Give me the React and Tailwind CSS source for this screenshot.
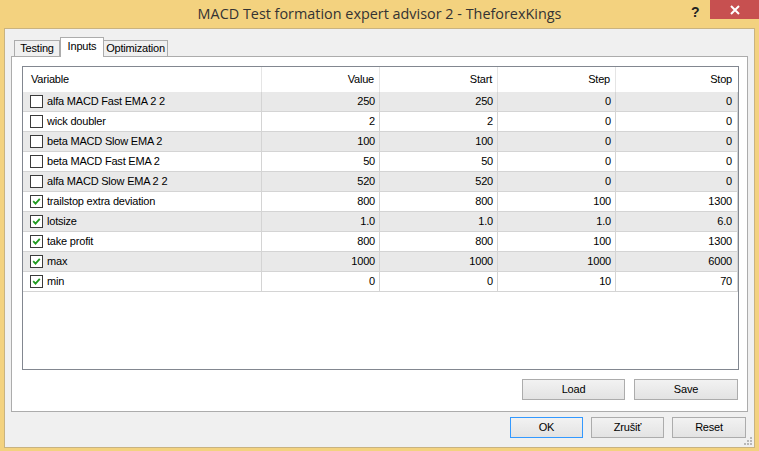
import React from "react";

const ROWS = [
  { name: "alfa MACD Fast EMA 2 2", on: false, value: "250", start: "250", step: "0", stop: "0" },
  { name: "wick doubler", on: false, value: "2", start: "2", step: "0", stop: "0" },
  { name: "beta MACD Slow EMA 2", on: false, value: "100", start: "100", step: "0", stop: "0" },
  { name: "beta MACD Fast EMA 2", on: false, value: "50", start: "50", step: "0", stop: "0" },
  { name: "alfa MACD Slow EMA 2 2", on: false, value: "520", start: "520", step: "0", stop: "0" },
  { name: "trailstop extra deviation", on: true, value: "800", start: "800", step: "100", stop: "1300" },
  { name: "lotsize", on: true, value: "1.0", start: "1.0", step: "1.0", stop: "6.0" },
  { name: "take profit", on: true, value: "800", start: "800", step: "100", stop: "1300" },
  { name: "max", on: true, value: "1000", start: "1000", step: "1000", stop: "6000" },
  { name: "min", on: true, value: "0", start: "0", step: "10", stop: "70" },
];

function CheckBox({ checked }) {
  return (
    <div className="w-[13px] h-[13px] border border-[#3a3a3a] bg-white flex items-center justify-center shrink-0">
      {checked && (
        <svg width="11" height="11" viewBox="0 0 11 11">
          <path d="M2.2 5.2 L4.5 7.6 L8.8 2.8" fill="none" stroke="#1f9a1f" strokeWidth="1.8" />
        </svg>
      )}
    </div>
  );
}

function Button({ children, primary, className }) {
  return (
    <button
      className={
        "h-[21px] border text-[11px] text-black bg-gradient-to-b from-[#f2f2f2] to-[#e3e3e3] " +
        (primary ? "border-[#3399ff] " : "border-[#acacac] ") +
        className
      }
    >
      {children}
    </button>
  );
}

export default function App() {
  return (
    <div className="w-[759px] h-[451px] bg-[#f3d27f] flex flex-col font-['Liberation_Sans',sans-serif] tracking-[-0.2px] overflow-hidden">
      {/* title bar */}
      <div className="h-[28px] relative flex items-center justify-center">
        <span className="text-[14.4px] text-[#333] font-['Open_Sans',sans-serif] tracking-normal -mt-[1px]">
          MACD Test formation expert advisor 2 - TheforexKings
        </span>
        <span className="absolute left-[691px] top-[2px] text-[14px] font-bold text-[#222] tracking-normal">?</span>
        <div className="absolute left-[710px] top-0 w-[49px] h-[19px] bg-[#c75050] flex items-center justify-center">
          <svg width="10" height="10" viewBox="0 0 10 10">
            <path d="M1 1 L9 9 M9 1 L1 9" stroke="white" strokeWidth="2" />
          </svg>
        </div>
      </div>

      {/* client */}
      <div className="ml-[4px] mr-[4px] mb-[3px] flex-1 border border-[#c9b380] bg-[#f0f0f0] flex flex-col relative">
        {/* tabs */}
        <div className="h-[27px] pl-[9px] flex items-end text-[11px] text-black">
          <div className="h-[16px] w-[46px] border border-b-0 border-[#acacac] bg-[#f0f0f0] flex items-center justify-center">Testing</div>
          <div className="h-[20px] w-[44px] -mb-px border border-b-0 border-[#acacac] bg-white flex items-center justify-center pb-[2px] relative z-10">Inputs</div>
          <div className="h-[16px] w-[64px] border border-b-0 border-l-0 border-[#acacac] bg-[#f0f0f0] flex items-center justify-center">Optimization</div>
        </div>

        {/* panel */}
        <div className="ml-[6px] mr-[6px] h-[356px] border border-[#acacac] bg-white flex flex-col">
          <div className="ml-[10px] mr-[8px] mt-[9px] h-[304px] border border-[#828790] bg-white text-[11px] text-black">
            <div className="grid grid-cols-[239px_118px_118px_118px_1fr] h-[25px]">
              <div className="flex items-center pl-[8px] border-r border-[#e5e5e5]">Variable</div>
              <div className="flex items-center justify-end pr-[5px] border-r border-[#e5e5e5]">Value</div>
              <div className="flex items-center justify-end pr-[5px] border-r border-[#e5e5e5]">Start</div>
              <div className="flex items-center justify-end pr-[5px] border-r border-[#e5e5e5]">Step</div>
              <div className="flex items-center justify-end pr-[6px]">Stop</div>
            </div>
            {ROWS.map((r, i) => (
              <div
                key={i}
                className={
                  "grid grid-cols-[239px_118px_118px_118px_1fr] h-[20px] border-b border-[#d4d4d4] " +
                  (i % 2 === 0 ? "bg-[#e9e9e9]" : "bg-white")
                }
              >
                <div className="flex items-center pl-[7px] gap-[4px] border-r border-[#d4d4d4]">
                  <CheckBox checked={r.on} />
                  <span>{r.name}</span>
                </div>
                <div className="flex items-center justify-end pr-[4px] border-r border-[#d4d4d4]">{r.value}</div>
                <div className="flex items-center justify-end pr-[4px] border-r border-[#d4d4d4]">{r.start}</div>
                <div className="flex items-center justify-end pr-[4px] border-r border-[#d4d4d4]">{r.step}</div>
                <div className="flex items-center justify-end pr-[5px] border-r border-[#d4d4d4]">{r.stop}</div>
              </div>
            ))}
          </div>
          <div className="flex justify-end gap-[9px] mt-[9px] mr-[9px]">
            <Button className="w-[103px]">Load</Button>
            <Button className="w-[104px]">Save</Button>
          </div>
        </div>

        {/* bottom buttons */}
        <div className="flex justify-end gap-[8px] mt-[5px] mr-[8px]">
          <Button primary className="w-[73px]">OK</Button>
          <Button className="w-[73px]">Zrušiť</Button>
          <Button className="w-[74px]">Reset</Button>
        </div>

        {/* resize grip */}
        <svg className="absolute right-[1px] bottom-[1px]" width="9" height="9" viewBox="0 0 9 9">
          <rect x="6" y="0" width="2" height="2" fill="#b8b8b8" />
          <rect x="3" y="3" width="2" height="2" fill="#b8b8b8" />
          <rect x="6" y="3" width="2" height="2" fill="#b8b8b8" />
          <rect x="0" y="6" width="2" height="2" fill="#b8b8b8" />
          <rect x="3" y="6" width="2" height="2" fill="#b8b8b8" />
          <rect x="6" y="6" width="2" height="2" fill="#b8b8b8" />
        </svg>
      </div>
    </div>
  );
}
